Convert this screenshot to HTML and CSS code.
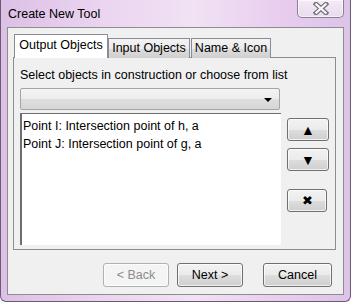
FILE: index.html
```html
<!DOCTYPE html>
<html>
<head>
<meta charset="utf-8">
<link rel="stylesheet" href="styles.css">
</head>
<body>
<div class="window">
  <div class="titlebar">
    <span class="title">Create New Tool</span>
    <div class="close">
      <svg width="18" height="13" viewBox="0 0 18 13">
        <path d="M4 2 L14 11 M14 2 L4 11" stroke="#6f6f78" stroke-width="4.5" stroke-linecap="square" fill="none"/>
        <path d="M4.3 2.3 L13.7 10.7 M13.7 2.3 L4.3 10.7" stroke="#fafafa" stroke-width="2.2" stroke-linecap="square" fill="none"/>
      </svg>
    </div>
  </div>
  <div class="client">
    <div class="tabs">
      <div class="tab active">Output Objects</div>
      <div class="tab t2">Input Objects</div>
      <div class="tab t3">Name &amp; Icon</div>
    </div>
    <div class="panel">
      <div class="label">Select objects in construction or choose from list</div>
      <div class="combo"><span class="arrow"></span></div>
      <div class="listrow">
        <div class="list">
          <div class="item">Point I: Intersection point of h, a</div>
          <div class="item">Point J: Intersection point of g, a</div>
        </div>
        <div class="side">
          <div class="btn sq">&#9650;</div>
          <div class="btn sq">&#9660;</div>
          <div class="btn sq del">&#10006;</div>
        </div>
      </div>
    </div>
    <div class="footer">
      <div class="btn wide disabled">&lt; Back</div>
      <div class="btn wide">Next &gt;</div>
      <div class="btn wide cancel">Cancel</div>
    </div>
  </div>
</div>
</body>
</html>
```

FILE: styles.css
```css
* { box-sizing: border-box; }
html, body { margin: 0; padding: 0; }
body {
  width: 351px;
  height: 302px;
  overflow: hidden;
  background: #ffffff;
  font-family: "Liberation Sans", Arial, sans-serif;
  font-size: 12.5px;
  color: #000;
}
.window {
  width: 351px;
  height: 302px;
  border: 1px solid #6b5a70;
  border-top: none;
  border-radius: 0 0 6px 6px;
  background: linear-gradient(90deg, #dcc0e6 0%, #ebd5f0 30%, #f1e2f4 55%, #e8cdef 80%, #dcc3e8 100%);
  display: flex;
  flex-direction: column;
}
.titlebar {
  height: 27px;
  display: flex;
  align-items: flex-start;
  justify-content: space-between;
  padding-left: 7px;
  padding-right: 6px;
}
.title {
  margin-top: 7px;
  color: #000;
}
.close {
  width: 47px;
  height: 18px;
  border: 1px solid #8c7f94;
  border-top: none;
  border-radius: 0 0 5px 5px;
  background: linear-gradient(#f4eaf6, #e9dcee);
  display: flex;
  align-items: center;
  justify-content: center;
  box-shadow: inset 0 0 0 1px rgba(255,255,255,0.6);
}
.client {
  margin: 0 6px 0 6px;
  height: 268px;
  border: 1px solid #8d8d8d;
  background: #f0f0f0;
  display: flex;
  flex-direction: column;
  padding: 6px 7px 0 5px;
}
.tabs {
  display: flex;
  align-items: flex-end;
  height: 24px;
  padding-left: 1px;
  position: relative;
  z-index: 1;
  margin-bottom: -1px;
}
.tab {
  height: 20px;
  border: 1px solid #898c95;
  border-bottom: none;
  line-height: 19px;
  text-align: center;
  white-space: nowrap;
  background: linear-gradient(#f3f3f3 0%, #ebebeb 50%, #dddddd 51%, #cfcfcf 100%);
}
.tab.active {
  width: 94px;
  height: 24px;
  line-height: 20px;
  background: #ffffff;
}
.t2 { width: 82px; }
.t3 { width: 80px; margin-left: 1px; }
.panel {
  width: 323px;
  height: 193px;
  border: 1px solid #898c95;
  background: #f0f0f0;
  padding: 10px 6px 0 6px;
}
.label {
  height: 20px;
  line-height: 14px;
}
.combo {
  width: 260px;
  height: 22px;
  border: 1px solid #a4a4a4;
  border-radius: 2px;
  background: linear-gradient(#f4f4f4 0%, #ececec 50%, #dedede 51%, #d6d6d6 100%);
  display: flex;
  align-items: center;
  justify-content: flex-end;
  padding-right: 7px;
  padding-top: 2px;
}
.arrow {
  width: 0;
  height: 0;
  border-left: 4px solid transparent;
  border-right: 4px solid transparent;
  border-top: 4px solid #000;
}
.listrow {
  display: flex;
  margin-top: 3px;
}
.list {
  width: 261px;
  height: 132px;
  background: #fff;
  border-top: 1px solid #6e6e6e;
  border-left: 2px solid #6e6e6e;
  padding: 4px 0 0 1px;
}
.item {
  height: 18px;
  line-height: 16px;
}
.side {
  display: flex;
  flex-direction: column;
  padding-left: 6px;
  padding-top: 5px;
}
.btn {
  border: 1px solid #707070;
  border-radius: 3px;
  background: linear-gradient(#f2f2f2 0%, #ebebeb 50%, #dddddd 51%, #cfcfcf 100%);
  display: flex;
  align-items: center;
  justify-content: center;
  box-shadow: inset 0 0 0 1px rgba(255,255,255,0.7);
}
.sq {
  width: 42px;
  height: 23px;
  font-size: 14px;
  margin-bottom: 7px;
}
.del {
  width: 40px;
  margin-top: 11px;
  font-size: 13px;
}
.footer {
  display: flex;
  padding-left: 90px;
  padding-top: 13px;
}
.wide {
  width: 66px;
  height: 24px;
  margin-right: 7px;
}
.disabled {
  border-color: #adb2b5;
  background: #f4f4f4;
  color: #8b8b8b;
  margin-right: 8px;
}
.cancel {
  width: 69px;
  margin-left: 13px;
  margin-right: 0;
}
```
